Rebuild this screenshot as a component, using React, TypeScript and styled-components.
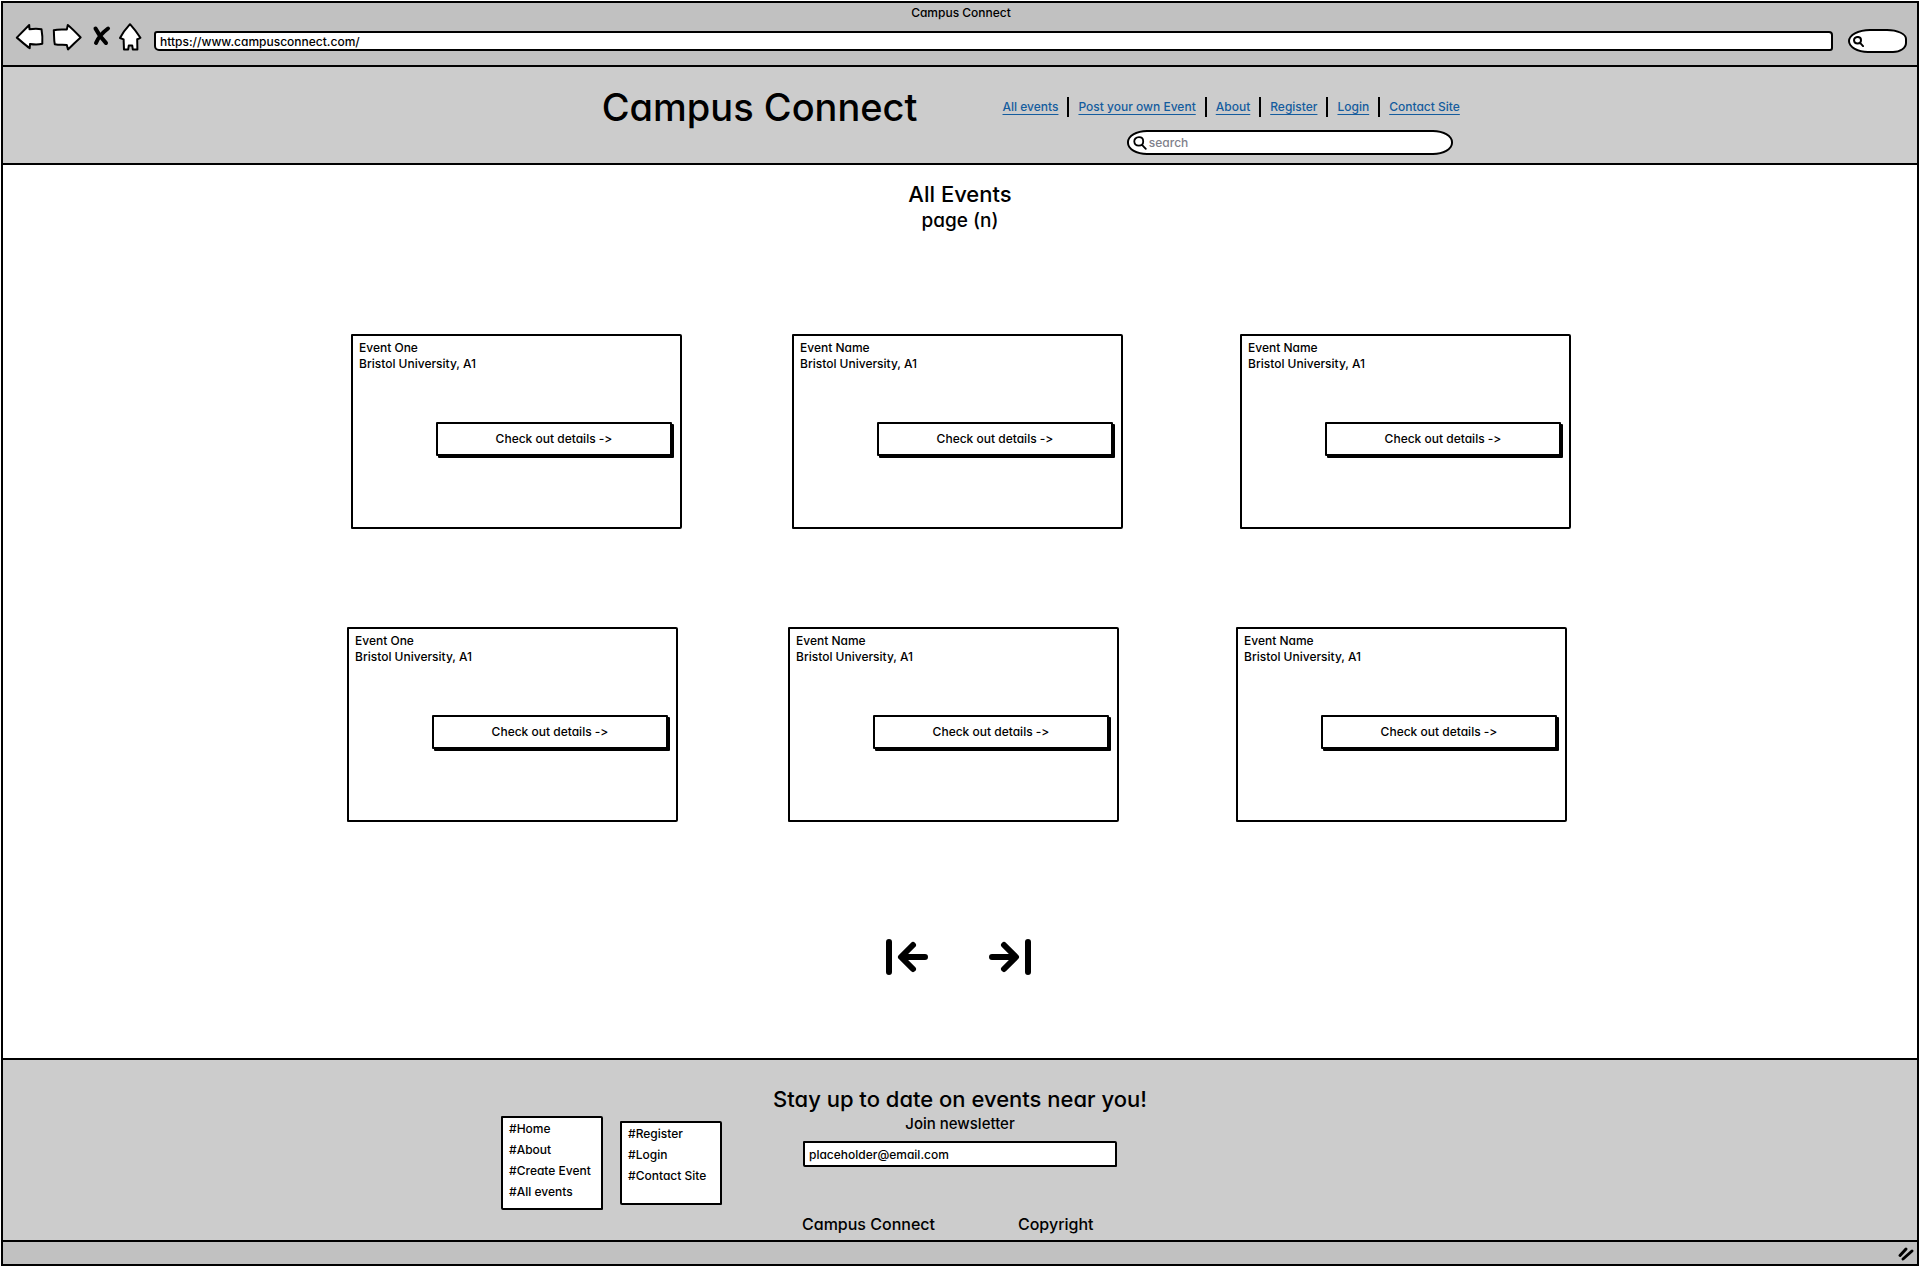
import React from "react";
import styled, { createGlobalStyle } from "styled-components";

const ink = "#000";
const paper = "#fff";
const band = "#ccc";
const chrome = "#c1c1c1";

const GlobalStyle = createGlobalStyle`
  *, *::before, *::after { box-sizing: border-box; }
  body {
    margin: 0;
    background: ${paper};
    color: ${ink};
    font-family: Inter, "Liberation Sans", sans-serif;
    font-feature-settings: "cv11" 1, "calt" 0;
    font-size: 12px;
    font-weight: 500;
    line-height: 16px;
  }
  h1, h2, p, ul { margin: 0; padding: 0; font-weight: 500; }
  ul { list-style: none; }
  button, input { font: inherit; font-feature-settings: inherit; color: inherit; }
`;

const Window = styled.div`
  display: flex;
  flex-direction: column;
  min-height: calc(100vh - 2px);
  margin: 1px;
  border: 2px solid ${ink};
`;

/* Browser chrome */

const Chrome = styled.div`
  padding: 0 10px 12px 12px;
  background: ${chrome};
  border-bottom: 2px solid ${ink};
`;

const WindowTitle = styled.p`
  line-height: 20px;
  text-align: center;
`;

const Toolbar = styled.div`
  display: flex;
  align-items: flex-end;
  gap: 15px;
`;

const ToolButtons = styled.div`
  display: flex;
  gap: 7px;
`;

const IconButton = styled.button`
  display: block;
  padding: 0;
  border: 0;
  background: none;
  cursor: pointer;

  svg { display: block; }
`;

const AddressBar = styled.input`
  flex: 1;
  min-width: 0;
  height: 20px;
  margin: 0 0 2px -3px;
  padding: 0 4px;
  background: ${paper};
  border: 2px solid ${ink};
  border-radius: 3px 4px 3px 5px;
  outline: none;
`;

const SearchPill = styled.label`
  display: flex;
  align-items: center;
  width: 59px;
  height: 24px;
  padding-left: 3px;
  background: ${paper};
  border: 2px solid ${ink};
  border-radius: 22px 20px 14px 20px / 12px 10px 10px 12px;

  svg { flex: none; }
`;

const BareInput = styled.input`
  flex: 1;
  min-width: 0;
  padding: 0;
  border: 0;
  background: none;
  outline: none;

  &::placeholder { color: #80808a; opacity: 1; }
`;

/* Site header */

const Header = styled.header`
  display: grid;
  grid-template-columns: 1fr 1fr;
  column-gap: 85px;
  padding: 16px 0 8px;
  background: ${band};
  border-bottom: 2px solid ${ink};
`;

const Brand = styled.h1`
  justify-self: end;
  font-size: 38px;
  line-height: 48px;
`;

const HeaderTools = styled.div`
  display: flex;
  flex-direction: column;
  align-items: flex-end;
  justify-self: start;
  gap: 13px;
  padding-top: 14px;
`;

const NavList = styled.ul`
  display: flex;
  align-items: center;

  li { padding: 2px 9px; }
  li + li { border-left: 2px solid ${ink}; }
  li:first-child { padding-left: 0; }
  li:last-child { padding-right: 0; }
`;

const NavLink = styled.a`
  color: #145c9e;
  text-decoration: underline;
  text-decoration-thickness: 1px;
  text-underline-offset: 3px;
`;

const SiteSearch = styled.label`
  display: flex;
  align-items: center;
  gap: 2px;
  width: 326px;
  height: 25px;
  margin-right: 7px;
  padding: 0 14px 0 4px;
  background: ${paper};
  border: 2px solid ${ink};
  border-radius: 20px / 12px;
`;

/* Events */

const Main = styled.main`
  display: flex;
  flex: 1;
  flex-direction: column;
  align-items: center;
  padding: 15px 0 82px;
`;

const PageTitle = styled.h2`
  font-size: 22px;
  line-height: 28px;
`;

const PageNumber = styled.p`
  font-size: 19px;
  line-height: 26px;
`;

const EventRows = styled.div`
  display: flex;
  flex-direction: column;
  gap: 98px;
  margin: 100px 0 116px;
`;

const EventRow = styled.div<{ $inset: number }>`
  display: grid;
  grid-template-columns: 441px 448px 331px;
  margin: 0 ${(p) => p.$inset}px 0 ${(p) => 8 - p.$inset}px;
`;

const Card = styled.article`
  display: flex;
  flex-direction: column;
  width: 331px;
  height: 195px;
  padding: 4px 8px 4px 6px;
  border: 2px solid ${ink};
  border-radius: 1px 2px 2px 1px;
`;

const DetailsButton = styled.button`
  align-self: flex-end;
  width: 236px;
  height: 34px;
  margin-top: 50px;
  background: ${paper};
  border: 2px solid ${ink};
  border-radius: 1px;
  box-shadow: 2px 2px 0 ${ink};
  cursor: pointer;
`;

const Pager = styled.div`
  display: flex;
  gap: 61px;
  margin-right: 4px;
`;

/* Footer */

const Footer = styled.footer`
  display: grid;
  grid-template-columns: 1fr minmax(378px, auto) 1fr;
  column-gap: 49px;
  padding: 24px 0 6px;
  background: ${band};
  border-top: 2px solid ${ink};
`;

const LinkBoxes = styled.nav`
  display: flex;
  align-items: center;
  justify-self: end;
  gap: 17px;
  padding-top: 7px;
`;

const LinkBox = styled.ul<{ $height: number }>`
  width: 102px;
  height: ${(p) => p.$height}px;
  padding: 0 6px;
  background: ${paper};
  border: 2px solid ${ink};
  border-radius: 1px 2px 1px 2px;
  line-height: 21px;
  white-space: nowrap;

  a { color: inherit; text-decoration: none; }
`;

const Newsletter = styled.form`
  display: flex;
  flex-direction: column;
  align-items: center;
`;

const NewsletterTitle = styled.h2`
  font-size: 22px;
  line-height: 30px;
`;

const NewsletterLabel = styled.label`
  font-size: 15px;
  line-height: 20px;
`;

const EmailInput = styled.input`
  width: 314px;
  height: 26px;
  margin-top: 7px;
  padding: 0 4px;
  background: ${paper};
  border: 2px solid ${ink};
  border-radius: 1px 2px;
  outline: none;
`;

const Legal = styled.div`
  display: flex;
  gap: 83px;
  width: 316px;
  margin-top: 47px;
  font-size: 16px;
  line-height: 20px;
`;

const StatusBar = styled.div`
  display: flex;
  justify-content: flex-end;
  padding: 4px 2px 2px;
  background: ${chrome};
  border-top: 2px solid ${ink};
`;

const outline = {
  fill: paper,
  stroke: ink,
  strokeWidth: 2,
  strokeLinejoin: "round" as const,
};

const BackIcon = () => (
  <svg width="30" height="30" viewBox="0 0 30 30">
    <path {...outline} d="M1.8 14.6 14.2 2l.3 4.2c4-.6 8-.8 12 0 .9 5 1.1 10 .8 14.600-4 1-8.5.8-12.3.2l-.3 4.200C10 22 6 18 1.800 14.600Z" />
  </svg>
);

const ForwardIcon = () => (
  <svg width="30" height="30" viewBox="0 0 30 30">
    <path {...outline} d="M1.800 7.200c4-1 8.500-.6 13-.6L15.800 2c4.600 3.800 8.600 8 12.800 12.400-4.400 3.800-8 8-12.600 12L14.800 22c-4-.4-8 .2-12-.8C1.800 17 2.200 12 1.800 7.200Z" />
  </svg>
);

const StopIcon = () => (
  <svg width="22" height="30" viewBox="0 0 22 30">
    <path d="M6.500 5.500c2.500 5 5.500 9.500 10.500 14.500M19 5.500C13 10 9 15 7 20" fill="none" stroke={ink} strokeWidth="4" strokeLinecap="round" />
  </svg>
);

const HomeIcon = () => (
  <svg width="24" height="30" viewBox="0 0 24 30">
    <path {...outline} d="M12 1.200c3.600 4 7.200 8.600 10.400 13.600-1.200 1-2.200 1.200-3.200 1.400l.2 10.200h-4.600l-.6-4h-3.400l-.6 4H6L5.600 16.400 2 15C4.600 10 8 5.600 12 1.200Z" />
  </svg>
);

const MagnifierIcon = ({ size }: { size: number }) => (
  <svg width={size} height={size} viewBox="0 0 14 14">
    <path d="M6 1.200C2.800 1.200 1.200 3.200 1.300 5.600 1.500 8 3.200 9.600 5.800 9.600S10.200 7.800 10.200 5.400 8.600 1.200 6 1.200ZM9 8.800l3.800 4" fill="none" stroke={ink} strokeWidth={size < 14 ? 2.5 : 1.8} strokeLinecap="round" />
  </svg>
);

const FirstPageIcon = () => (
  <svg width="42" height="38" viewBox="0 0 42 38">
    <path d="M3 4v30M39 19H16M27 7 15 19l12 12" fill="none" stroke={ink} strokeWidth="6" strokeLinecap="round" strokeLinejoin="round" />
  </svg>
);

const LastPageIcon = () => (
  <svg width="42" height="38" viewBox="0 0 42 38">
    <path d="M39 4v30M3 19h23M15 7l12 12-12 12" fill="none" stroke={ink} strokeWidth="6" strokeLinecap="round" strokeLinejoin="round" />
  </svg>
);

const ResizeGrip = () => (
  <svg width="18" height="16" viewBox="0 0 18 16">
    <path d="M3 9.500 9 3M6 13 15 5" fill="none" stroke={ink} strokeWidth="3" strokeLinecap="round" />
  </svg>
);

const navItems = ["All events", "Post your own Event", "About", "Register", "Login", "Contact Site"];
const eventNames = ["Event One", "Event Name", "Event Name"];
const eventRows = [
  { id: "upper", inset: 3 },
  { id: "lower", inset: 7 },
];
const footerLinks = [
  { height: 94, items: ["#Home", "#About", "#Create Event", "#All events"] },
  { height: 84, items: ["#Register", "#Login", "#Contact Site"] },
];

const EventCard = ({ name }: { name: string }) => (
  <Card>
    <p>{name}</p>
    <p>Bristol University, A1</p>
    <DetailsButton type="button">Check out details -&gt;</DetailsButton>
  </Card>
);

export default function App() {
  return (
    <>
      <GlobalStyle />
      <Window>
        <Chrome>
          <WindowTitle>Campus Connect</WindowTitle>
          <Toolbar>
            <ToolButtons>
              <IconButton type="button" aria-label="Back"><BackIcon /></IconButton>
              <IconButton type="button" aria-label="Forward"><ForwardIcon /></IconButton>
              <IconButton type="button" aria-label="Stop"><StopIcon /></IconButton>
              <IconButton type="button" aria-label="Home"><HomeIcon /></IconButton>
            </ToolButtons>
            <AddressBar type="text" aria-label="Address" defaultValue="https://www.campusconnect.com/" />
            <SearchPill>
              <MagnifierIcon size={11} />
              <BareInput type="text" aria-label="Search the web" />
            </SearchPill>
          </Toolbar>
        </Chrome>

        <Header>
          <Brand>Campus Connect</Brand>
          <HeaderTools>
            <nav aria-label="Site">
              <NavList>
                {navItems.map((item) => (
                  <li key={item}><NavLink href="#">{item}</NavLink></li>
                ))}
              </NavList>
            </nav>
            <SiteSearch>
              <MagnifierIcon size={14} />
              <BareInput type="text" aria-label="Search events" placeholder="search" />
            </SiteSearch>
          </HeaderTools>
        </Header>

        <Main>
          <PageTitle>All Events</PageTitle>
          <PageNumber>page (n)</PageNumber>
          <EventRows>
            {eventRows.map((row) => (
              <EventRow key={row.id} $inset={row.inset}>
                {eventNames.map((name, i) => (
                  <EventCard key={i} name={name} />
                ))}
              </EventRow>
            ))}
          </EventRows>
          <Pager>
            <IconButton type="button" aria-label="First page"><FirstPageIcon /></IconButton>
            <IconButton type="button" aria-label="Last page"><LastPageIcon /></IconButton>
          </Pager>
        </Main>

        <Footer>
          <LinkBoxes aria-label="Footer">
            {footerLinks.map((box) => (
              <LinkBox key={box.height} $height={box.height}>
                {box.items.map((item) => (
                  <li key={item}><a href="#">{item}</a></li>
                ))}
              </LinkBox>
            ))}
          </LinkBoxes>
          <Newsletter>
            <NewsletterTitle>Stay up to date on events near you!</NewsletterTitle>
            <NewsletterLabel htmlFor="email">Join newsletter</NewsletterLabel>
            <EmailInput id="email" type="email" defaultValue="placeholder@email.com" />
            <Legal>
              <span>Campus Connect</span>
              <span>Copyright</span>
            </Legal>
          </Newsletter>
        </Footer>

        <StatusBar><ResizeGrip /></StatusBar>
      </Window>
    </>
  );
}
